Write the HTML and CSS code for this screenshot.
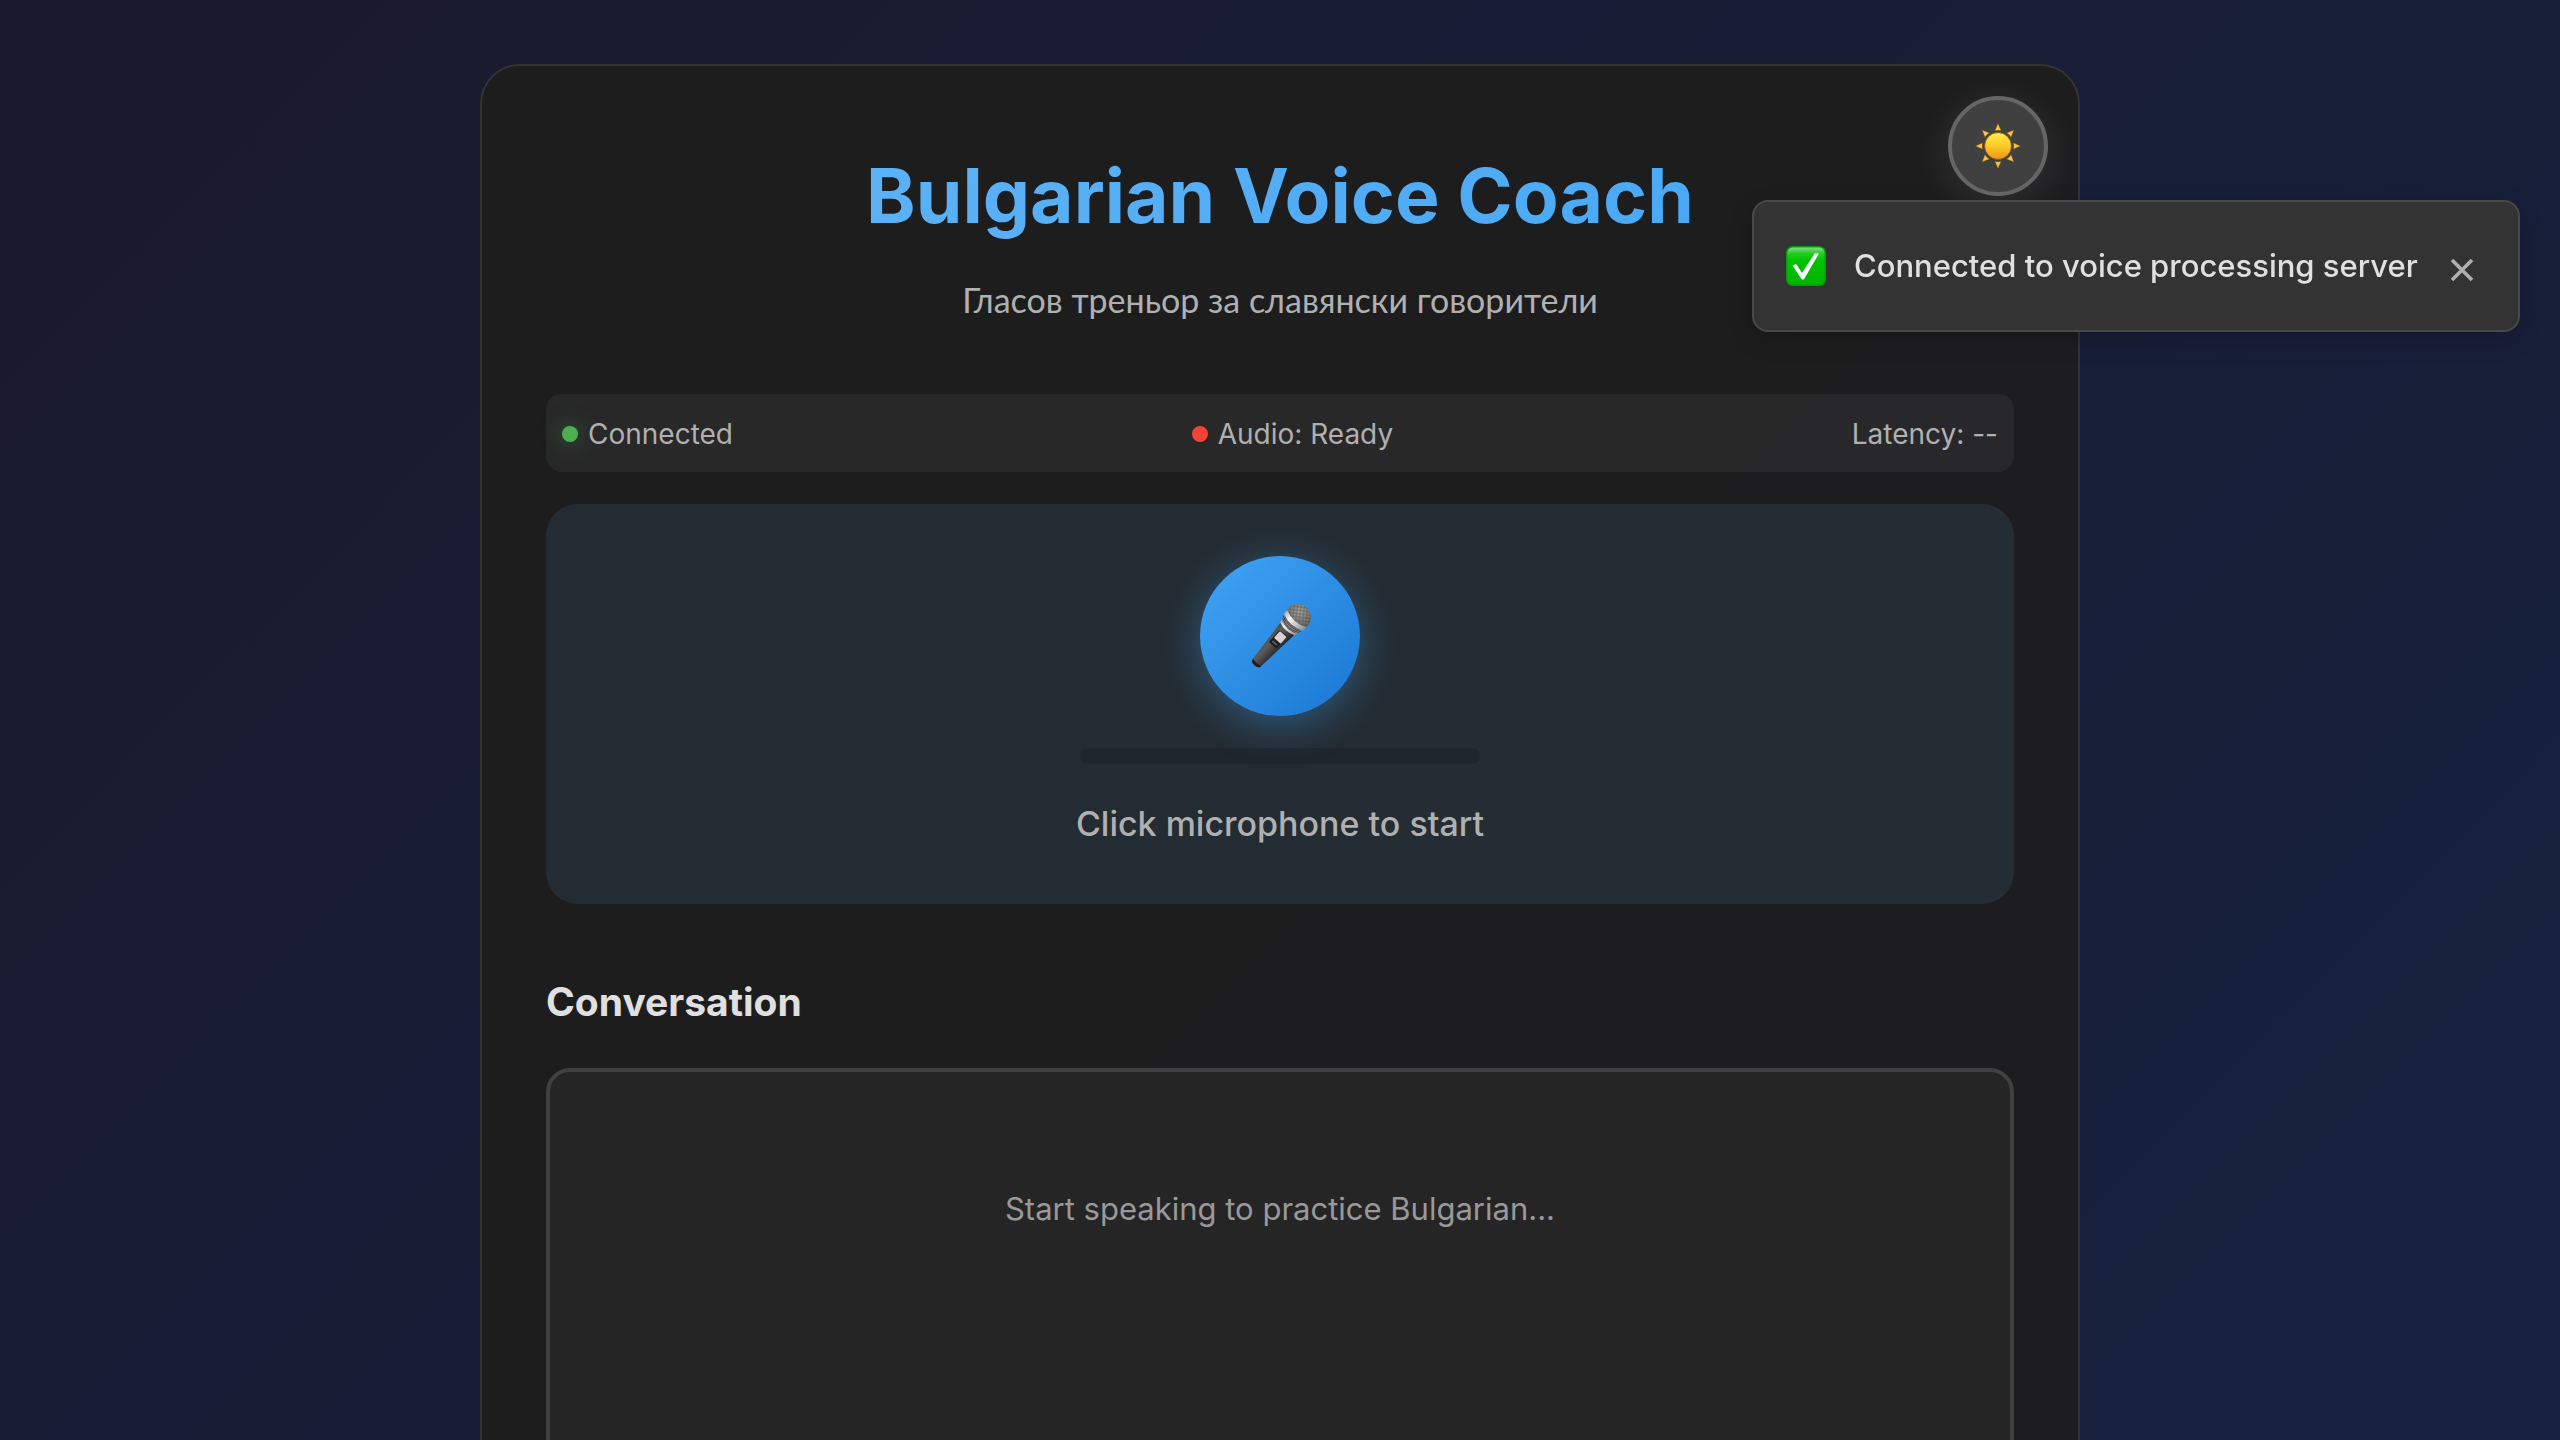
FILE: index.html
```
<!DOCTYPE html>
<html lang="en">
<head>
<meta charset="utf-8">
<meta name="viewport" content="width=device-width, initial-scale=1">
<title>Bulgarian Voice Coach</title>
<link rel="stylesheet" href="styles.css">
</head>
<body>
<div class="page">
  <main class="card">
    <button class="theme-toggle" type="button" aria-label="Toggle theme">
      <svg viewBox="0 0 44 44" aria-hidden="true">
        <defs>
          <linearGradient id="sun" x1="0" y1="0" x2="0" y2="1">
            <stop offset="0" stop-color="#ffec45"/>
            <stop offset=".5" stop-color="#fbcb2b"/>
            <stop offset="1" stop-color="#f29410"/>
          </linearGradient>
        </defs>
        <g fill="#fdc545" stroke="#6b4310" stroke-width=".4">
          <path id="ray" d="M22 -.5l3.200 7.300q-3.200-1.200-6.400 0z"/>
          <use href="#ray" transform="rotate(45 22 22)"/>
          <use href="#ray" transform="rotate(90 22 22)"/>
          <use href="#ray" transform="rotate(135 22 22)"/>
          <use href="#ray" transform="rotate(180 22 22)"/>
          <use href="#ray" transform="rotate(225 22 22)"/>
          <use href="#ray" transform="rotate(270 22 22)"/>
          <use href="#ray" transform="rotate(315 22 22)"/>
        </g>
        <circle cx="22" cy="22" r="13.400" fill="url(#sun)" stroke="#7a4a0c" stroke-width=".7"/>
      </svg>
    </button>

    <header class="intro">
      <h1 class="title">Bulgarian Voice Coach</h1>
      <p class="subtitle" lang="bg">Гласов треньор за славянски говорители</p>
    </header>

    <div class="status-bar">
      <div class="status"><span class="dot dot-on"></span>Connected</div>
      <div class="status"><span class="dot dot-off"></span>Audio: Ready</div>
      <div class="status">Latency: --</div>
    </div>

    <section class="recorder">
      <button class="mic" type="button" aria-label="Start recording">
        <svg viewBox="0 0 64 64" aria-hidden="true">
          <defs>
            <linearGradient id="body" x1="0" y1="0" x2="1" y2="0">
              <stop offset="0" stop-color="#4b4a49"/>
              <stop offset=".3" stop-color="#5e5d5b"/>
              <stop offset="1" stop-color="#242323"/>
            </linearGradient>
            <linearGradient id="ring" x1="0" y1="0" x2="1" y2="0">
              <stop offset="0" stop-color="#a5a7aa"/>
              <stop offset=".3" stop-color="#f3f5f7"/>
              <stop offset=".65" stop-color="#c3c5c8"/>
              <stop offset="1" stop-color="#8d8f92"/>
            </linearGradient>
            <radialGradient id="head" cx=".4" cy=".3" r=".75">
              <stop offset="0" stop-color="#b4b2ae"/>
              <stop offset="1" stop-color="#63615f"/>
            </radialGradient>
            <pattern id="mesh" width="2" height="2" patternUnits="userSpaceOnUse">
              <path d="M0 0h1v1H0zM1 1h1v1H1z" fill="#2f2e2d" fill-opacity=".55"/>
            </pattern>
          </defs>
          <g transform="translate(50 13) rotate(42)">
            <path d="M-9.500 13L-5.400 62q.4 3 5.400 3t5.400-3L9.500 13z" fill="url(#body)"/>
            <path d="M-5.400 61q0 4 5.400 4t5.400-4q-5.400 2-10.800 0z" fill="#1f1e1e"/>
            <circle r="13" fill="url(#head)"/>
            <circle r="13" fill="url(#mesh)"/>
            <path d="M-13.200 2Q0 8 13.200 2L12.600 7Q0 13 -12.600 7z" fill="url(#ring)"/>
            <path d="M-12.200 8Q0 14 12.200 8L10.400 13Q0 17 -10.400 13z" fill="#8b8a89"/>
            <path d="M-12 9Q0 15 12 9M-11 11Q0 17 11 11" fill="none" stroke="#353434" stroke-width=".8"/>
            <path d="M-10.400 13Q0 18 10.400 13L9.500 16Q0 20 -9.500 16z" fill="url(#ring)"/>
            <rect x="-5" y="22" width="10" height="16" rx="1.500" fill="#1d1c1c"/>
            <rect x="-4" y="22.500" width="9" height="9" rx="1" fill="#d6d2d3"/>
            <path d="M-3 34h6v2h-6z" fill="#5c5a59"/>
          </g>
        </svg>
      </button>
      <div class="level"></div>
      <p class="hint">Click microphone to start</p>
    </section>

    <h2 class="section-title">Conversation</h2>
    <section class="conversation">
      <p class="empty">Start speaking to practice Bulgarian...</p>
    </section>
  </main>
</div>

<div class="toast" role="status">
  <svg class="toast-icon" viewBox="0 0 40 40" aria-hidden="true">
    <defs>
      <linearGradient id="tick" x1="0" y1="0" x2="0" y2="1">
        <stop offset="0" stop-color="#8fe08f"/>
        <stop offset=".18" stop-color="#22cc22"/>
        <stop offset=".35" stop-color="#00c400"/>
        <stop offset="1" stop-color="#00b300"/>
      </linearGradient>
    </defs>
    <rect x=".7" y=".7" width="38.600" height="38.600" rx="6" fill="url(#tick)" stroke="#079a0b" stroke-width="1.400"/>
    <path d="M6.500 19.500L10.200 18L16 27L29 7L33 7.500L17.800 33.500h-2z" fill="#fff"/>
  </svg>
  <span class="toast-text">Connected to voice processing server</span>
  <button class="toast-close" type="button" aria-label="Close">
    <svg viewBox="0 0 24 24" aria-hidden="true"><path d="M2 2l20 20M22 2L2 22" stroke="#b0b0b0" stroke-width="3.600" fill="none"/></svg>
  </button>
</div>
</body>
</html>
```
FILE: styles.css
```
* {
  box-sizing: border-box;
  margin: 0;
  padding: 0;
}

body {
  font-family: Inter, "Liberation Sans", sans-serif;
  color: #e0e0e0;
  background: #1a1a2e;
}

button {
  border: 0;
  background: none;
  cursor: pointer;
}

svg {
  display: block;
  overflow: visible;
}

.page {
  height: 100vh;
  padding: 64px 32px;
  overflow-y: auto;
  scrollbar-width: none;
  background: linear-gradient(135deg, #1a1a2e 0%, #16213e 100%);
}

.card {
  position: relative;
  max-width: 1600px;
  margin: 0 auto;
  padding: 64px;
  border: 2px solid #333;
  border-radius: 40px;
  background: rgba(30, 30, 30, 0.95);
}

.theme-toggle {
  position: absolute;
  top: 30px;
  right: 30px;
  display: grid;
  place-items: center;
  width: 100px;
  height: 100px;
  border: 4px solid #666;
  border-radius: 50%;
  background: #404040;
  box-shadow: 0 8px 40px rgba(255, 255, 255, 0.1);
}

.theme-toggle svg {
  width: 44px;
  height: 44px;
}

.intro {
  margin-bottom: 64px;
  text-align: center;
}

.title {
  margin-bottom: 8px;
  font-size: 75px;
  font-weight: 700;
  line-height: 132px;
  color: transparent;
  background: linear-gradient(135deg, #64b5f6, #42a5f5);
  background-clip: text;
}

.subtitle {
  font-family: Lato, "Noto Sans", sans-serif;
  font-size: 34px;
  line-height: 60px;
  color: #b0b0b0;
}

.status-bar {
  display: flex;
  justify-content: space-between;
  margin-bottom: 32px;
  padding: 17px 16px 15px;
  border-radius: 16px;
  background: rgba(255, 255, 255, 0.05);
}

.status {
  display: flex;
  align-items: center;
  gap: 10px;
  font-size: 28px;
  line-height: 46px;
  color: #b0b0b0;
}

.dot {
  width: 16px;
  height: 16px;
  border-radius: 50%;
}

.dot-on {
  background: #4caf50;
  box-shadow: 0 0 20px rgba(76, 175, 80, 0.5);
}

.dot-off {
  background: #f44336;
}

.recorder {
  display: flex;
  flex-direction: column;
  align-items: center;
  gap: 32px;
  padding: 52px 32px;
  border-radius: 32px;
  background: rgba(100, 181, 246, 0.1);
}

.mic {
  display: grid;
  place-items: center;
  width: 160px;
  height: 160px;
  border-radius: 50%;
  background: linear-gradient(135deg, #42a5f5, #1976d2);
  box-shadow: 0 8px 40px rgba(66, 165, 245, 0.4);
}

.mic svg {
  width: 64px;
  height: 64px;
}

.level {
  width: 400px;
  height: 16px;
  border-radius: 8px;
  background: rgba(0, 0, 0, 0.12);
}

.hint {
  font-size: 34px;
  font-weight: 500;
  line-height: 56px;
  color: #b0b0b0;
}

.section-title {
  margin: 66px 0 34px;
  font-size: 39px;
  font-weight: 700;
  line-height: 64px;
}

.conversation {
  min-height: 600px;
  padding: 108px 32px;
  border: 4px solid #404040;
  border-radius: 24px;
  background: #252525;
}

.empty {
  font-size: 31px;
  line-height: 58px;
  text-align: center;
  color: #999;
}

.toast {
  position: fixed;
  top: 200px;
  right: 40px;
  display: flex;
  align-items: center;
  gap: 28px;
  width: 30vw;
  min-width: 768px;
  min-height: 132px;
  padding: 32px;
  border: 2px solid #484848;
  border-radius: 16px;
  background: #333;
  box-shadow: 0 8px 24px rgba(0, 0, 0, 0.2);
}

.toast-icon {
  width: 40px;
  height: 40px;
}

.toast-text {
  font-size: 31px;
  font-weight: 500;
  line-height: 50px;
}

.toast-close {
  padding: 8px 4px 0;
}

.toast-close svg {
  width: 24px;
  height: 24px;
}
```
